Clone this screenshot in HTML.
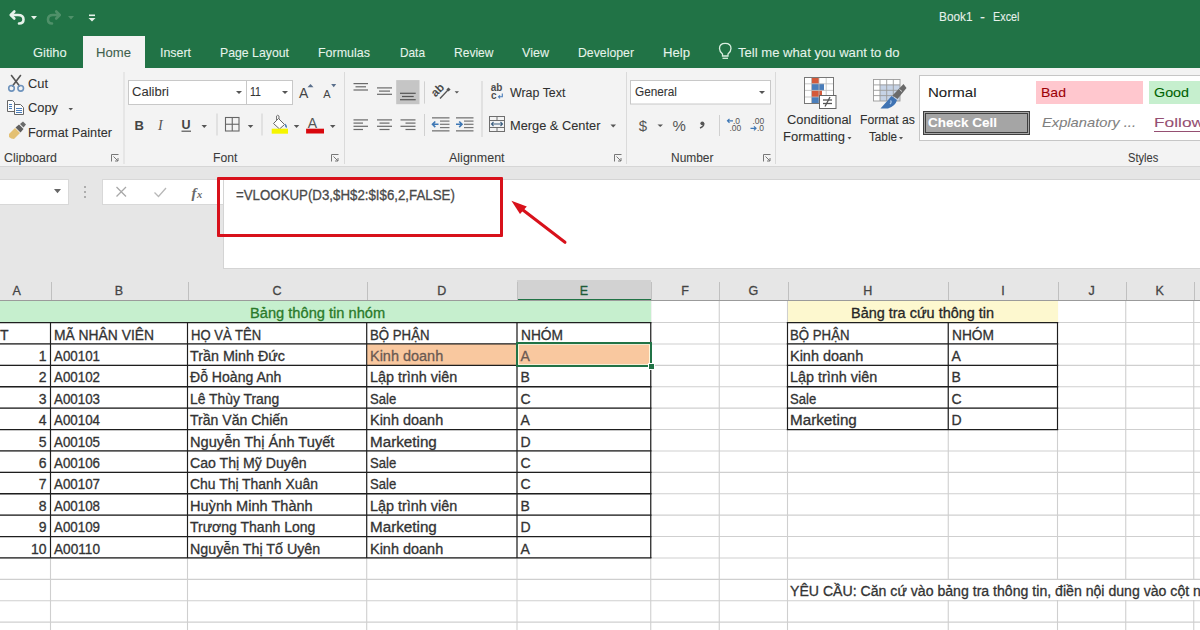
<!DOCTYPE html>
<html><head><meta charset="utf-8"><style>
html,body{margin:0;padding:0;width:1200px;height:630px;overflow:hidden;background:#fff;position:relative;font-family:"Liberation Sans",sans-serif}
.t{position:absolute;white-space:pre;transform-origin:0 0;-webkit-text-stroke:0.3px currentColor}
.r{-webkit-text-stroke:0.08px currentColor}
svg{overflow:visible}
</style></head><body>
<div style="position:absolute;left:0px;top:0px;width:1200px;height:68px;background:#217346;"></div>
<div style="position:absolute;left:83px;top:36px;width:62px;height:32px;background:#f3f3f3;"></div>
<div style="position:absolute;left:0px;top:68px;width:1200px;height:99px;background:#f3f3f3;"></div>
<div style="position:absolute;left:0px;top:166px;width:1200px;height:1px;background:#d6d6d6;"></div>
<div style="position:absolute;left:0px;top:167px;width:1200px;height:113px;background:#e6e6e6;"></div>
<div style="position:absolute;left:919.2px;top:75.3px;width:290px;height:65.3px;background:#ffffff;border:1px solid #c6c6c6;box-sizing:border-box"></div>
<div style="position:absolute;left:1036px;top:81.4px;width:107.2px;height:22.4px;background:#ffc7ce;"></div>
<div style="position:absolute;left:1149.2px;top:81.4px;width:60px;height:22.4px;background:#c6efce;"></div>
<div style="position:absolute;left:923.3px;top:111px;width:106.7px;height:23.8px;background:#a5a5a5;border:3px double #3f3f3f;box-sizing:border-box"></div>
<div style="position:absolute;left:1154px;top:130.5px;width:50px;height:1px;background:#954f72;"></div>
<div style="position:absolute;left:0px;top:179px;width:68.5px;height:26px;background:#ffffff;border:1px solid #d8d8d8;border-left:none;box-sizing:border-box"></div>
<div style="position:absolute;left:102px;top:179px;width:125px;height:26px;background:#ffffff;border:1px solid #d8d8d8;box-sizing:border-box"></div>
<div style="position:absolute;left:222.5px;top:179px;width:990px;height:90px;background:#ffffff;border:1px solid #d4d4d4;box-sizing:border-box"></div>
<div style="position:absolute;left:0px;top:280px;width:1200px;height:21px;background:#e6e6e6;"></div>
<div style="position:absolute;left:517px;top:280px;width:133.75px;height:21px;background:#d2d2d2;"></div>
<div style="position:absolute;left:517px;top:299px;width:133.75px;height:2px;background:#217346;"></div>
<div style="position:absolute;left:50.5px;top:282px;width:1px;height:18px;background:#c0c0c0;"></div>
<div style="position:absolute;left:187.5px;top:282px;width:1px;height:18px;background:#c0c0c0;"></div>
<div style="position:absolute;left:366.7px;top:282px;width:1px;height:18px;background:#c0c0c0;"></div>
<div style="position:absolute;left:517px;top:282px;width:1px;height:18px;background:#c0c0c0;"></div>
<div style="position:absolute;left:650.75px;top:282px;width:1px;height:18px;background:#c0c0c0;"></div>
<div style="position:absolute;left:719.25px;top:282px;width:1px;height:18px;background:#c0c0c0;"></div>
<div style="position:absolute;left:787.5px;top:282px;width:1px;height:18px;background:#c0c0c0;"></div>
<div style="position:absolute;left:948.25px;top:282px;width:1px;height:18px;background:#c0c0c0;"></div>
<div style="position:absolute;left:1057.5px;top:282px;width:1px;height:18px;background:#c0c0c0;"></div>
<div style="position:absolute;left:1125.75px;top:282px;width:1px;height:18px;background:#c0c0c0;"></div>
<div style="position:absolute;left:1193.75px;top:282px;width:1px;height:18px;background:#c0c0c0;"></div>
<div style="position:absolute;left:0px;top:301.5px;width:1200px;height:328.5px;background:#ffffff;"></div>
<svg style="position:absolute;left:0;top:0" width="1200" height="630"><line x1="0" y1="322.55" x2="1200" y2="322.55" stroke="#cfcfcf" stroke-width="1.1"/><line x1="0" y1="343.95" x2="1200" y2="343.95" stroke="#cfcfcf" stroke-width="1.1"/><line x1="0" y1="365.35" x2="1200" y2="365.35" stroke="#cfcfcf" stroke-width="1.1"/><line x1="0" y1="386.75" x2="1200" y2="386.75" stroke="#cfcfcf" stroke-width="1.1"/><line x1="0" y1="408.15" x2="1200" y2="408.15" stroke="#cfcfcf" stroke-width="1.1"/><line x1="0" y1="429.55" x2="1200" y2="429.55" stroke="#cfcfcf" stroke-width="1.1"/><line x1="0" y1="450.95" x2="1200" y2="450.95" stroke="#cfcfcf" stroke-width="1.1"/><line x1="0" y1="472.35" x2="1200" y2="472.35" stroke="#cfcfcf" stroke-width="1.1"/><line x1="0" y1="493.75" x2="1200" y2="493.75" stroke="#cfcfcf" stroke-width="1.1"/><line x1="0" y1="515.15" x2="1200" y2="515.15" stroke="#cfcfcf" stroke-width="1.1"/><line x1="0" y1="536.55" x2="1200" y2="536.55" stroke="#cfcfcf" stroke-width="1.1"/><line x1="0" y1="557.95" x2="1200" y2="557.95" stroke="#cfcfcf" stroke-width="1.1"/><line x1="0" y1="579.35" x2="1200" y2="579.35" stroke="#cfcfcf" stroke-width="1.1"/><line x1="0" y1="600.75" x2="1200" y2="600.75" stroke="#cfcfcf" stroke-width="1.1"/><line x1="0" y1="622.15" x2="1200" y2="622.15" stroke="#cfcfcf" stroke-width="1.1"/><line x1="0" y1="643.55" x2="1200" y2="643.55" stroke="#cfcfcf" stroke-width="1.1"/><line x1="50.50" y1="301" x2="50.50" y2="630" stroke="#cfcfcf" stroke-width="1.1"/><line x1="187.50" y1="301" x2="187.50" y2="630" stroke="#cfcfcf" stroke-width="1.1"/><line x1="366.70" y1="301" x2="366.70" y2="630" stroke="#cfcfcf" stroke-width="1.1"/><line x1="517.00" y1="301" x2="517.00" y2="630" stroke="#cfcfcf" stroke-width="1.1"/><line x1="650.75" y1="301" x2="650.75" y2="630" stroke="#cfcfcf" stroke-width="1.1"/><line x1="719.25" y1="301" x2="719.25" y2="630" stroke="#cfcfcf" stroke-width="1.1"/><line x1="787.50" y1="301" x2="787.50" y2="630" stroke="#cfcfcf" stroke-width="1.1"/><line x1="948.25" y1="301" x2="948.25" y2="630" stroke="#cfcfcf" stroke-width="1.1"/><line x1="1057.50" y1="301" x2="1057.50" y2="630" stroke="#cfcfcf" stroke-width="1.1"/><line x1="1125.75" y1="301" x2="1125.75" y2="630" stroke="#cfcfcf" stroke-width="1.1"/><line x1="1193.75" y1="301" x2="1193.75" y2="630" stroke="#cfcfcf" stroke-width="1.1"/></svg>
<div style="position:absolute;left:0px;top:301.15px;width:650.75px;height:21.4px;background:#c6efce;"></div>
<div style="position:absolute;left:787.5px;top:301.15px;width:270.0px;height:21.4px;background:#fdf8cf;"></div>
<div style="position:absolute;left:366.7px;top:343.95px;width:284px;height:21.4px;background:#f9c89f;"></div>
<div style="position:absolute;left:0px;top:300.2px;width:1200px;height:1.3px;background:#9b9b9b;"></div>
<svg style="position:absolute;left:0;top:0" width="1200" height="630"><line x1="-2.70" y1="322.55" x2="651.45" y2="322.55" stroke="#1e1e1e" stroke-width="1.3"/><line x1="-2.70" y1="343.95" x2="651.45" y2="343.95" stroke="#1e1e1e" stroke-width="1.3"/><line x1="-2.70" y1="365.35" x2="651.45" y2="365.35" stroke="#1e1e1e" stroke-width="1.3"/><line x1="-2.70" y1="386.75" x2="651.45" y2="386.75" stroke="#1e1e1e" stroke-width="1.3"/><line x1="-2.70" y1="408.15" x2="651.45" y2="408.15" stroke="#1e1e1e" stroke-width="1.3"/><line x1="-2.70" y1="429.55" x2="651.45" y2="429.55" stroke="#1e1e1e" stroke-width="1.3"/><line x1="-2.70" y1="450.95" x2="651.45" y2="450.95" stroke="#1e1e1e" stroke-width="1.3"/><line x1="-2.70" y1="472.35" x2="651.45" y2="472.35" stroke="#1e1e1e" stroke-width="1.3"/><line x1="-2.70" y1="493.75" x2="651.45" y2="493.75" stroke="#1e1e1e" stroke-width="1.3"/><line x1="-2.70" y1="515.15" x2="651.45" y2="515.15" stroke="#1e1e1e" stroke-width="1.3"/><line x1="-2.70" y1="536.55" x2="651.45" y2="536.55" stroke="#1e1e1e" stroke-width="1.3"/><line x1="-2.70" y1="557.95" x2="651.45" y2="557.95" stroke="#1e1e1e" stroke-width="1.3"/><line x1="50.50" y1="322.55" x2="50.50" y2="557.95" stroke="#1e1e1e" stroke-width="1.15"/><line x1="187.50" y1="322.55" x2="187.50" y2="557.95" stroke="#1e1e1e" stroke-width="1.15"/><line x1="366.70" y1="322.55" x2="366.70" y2="557.95" stroke="#1e1e1e" stroke-width="1.15"/><line x1="517.00" y1="322.55" x2="517.00" y2="557.95" stroke="#1e1e1e" stroke-width="1.15"/><line x1="650.75" y1="322.55" x2="650.75" y2="557.95" stroke="#1e1e1e" stroke-width="1.15"/><line x1="786.80" y1="322.55" x2="1058.20" y2="322.55" stroke="#1e1e1e" stroke-width="1.3"/><line x1="786.80" y1="343.95" x2="1058.20" y2="343.95" stroke="#1e1e1e" stroke-width="1.3"/><line x1="786.80" y1="365.35" x2="1058.20" y2="365.35" stroke="#1e1e1e" stroke-width="1.3"/><line x1="786.80" y1="386.75" x2="1058.20" y2="386.75" stroke="#1e1e1e" stroke-width="1.3"/><line x1="786.80" y1="408.15" x2="1058.20" y2="408.15" stroke="#1e1e1e" stroke-width="1.3"/><line x1="786.80" y1="429.55" x2="1058.20" y2="429.55" stroke="#1e1e1e" stroke-width="1.3"/><line x1="787.50" y1="322.55" x2="787.50" y2="429.55" stroke="#1e1e1e" stroke-width="1.15"/><line x1="948.25" y1="322.55" x2="948.25" y2="429.55" stroke="#1e1e1e" stroke-width="1.15"/><line x1="1057.50" y1="322.55" x2="1057.50" y2="429.55" stroke="#1e1e1e" stroke-width="1.15"/></svg>
<div style="position:absolute;left:788.0px;top:579.8499999999999px;width:1200px;height:20.4px;background:#ffffff;"></div>
<div style="position:absolute;left:516px;top:342.45px;width:135.75px;height:24.4px;border:2px solid #217346;box-sizing:border-box"></div>
<div style="position:absolute;left:518px;top:344.45px;width:131.75px;height:20.4px;border:1px solid rgba(255,255,230,.85);box-sizing:border-box"></div>
<div style="position:absolute;left:648.25px;top:362.84999999999997px;width:5px;height:5px;background:#217346;border:1px solid #fff;box-sizing:content-box"></div>
<div style="position:absolute;left:217px;top:176.5px;width:285.5px;height:60px;border:3px solid #d8111b;box-sizing:border-box;border-radius:1px"></div>
<svg style="position:absolute;left:0;top:0" width="1200" height="630"><line x1="565" y1="242.3" x2="521" y2="208.5" stroke="#d8111b" stroke-width="3" stroke-linecap="round"/><polygon points="511.4,200.8 526.8,206.6 520,214" fill="#d8111b"/></svg>
<svg style="position:absolute;left:0;top:0" width="1200" height="630">
<!-- QAT undo -->
<g fill="none" stroke="#e6f2ea" stroke-width="2.6" stroke-linecap="round" stroke-linejoin="round">
  <path d="M11 15 L18 15 Q23.5 15 23.5 19.5 Q23.5 23.5 19 23.5"/>
  <path d="M14.3 11.5 L10.8 15 L14.3 18.5"/>
</g>
<polygon points="31,16 37,16 34,19.5" fill="#e6f2ea"/>
<g fill="none" stroke="#4f9069" stroke-width="2.6" stroke-linecap="round" stroke-linejoin="round">
  <path d="M59.5 15 L53 15 Q48 15 48 19.5 Q48 23.5 52 23.5"/>
  <path d="M56.2 11.5 L59.7 15 L56.2 18.5"/>
</g>
<polygon points="68,16 74,16 71,19.5" fill="#4f9069"/>
<rect x="89" y="14.5" width="6" height="1.6" fill="#e6f2ea"/>
<polygon points="88.5,18 95.5,18 92,21.5" fill="#e6f2ea"/>
<!-- ribbon group separators -->
<rect x="123.5" y="72" width="1" height="92" fill="#dadada"/>
<rect x="344" y="72" width="1" height="92" fill="#dadada"/>
<rect x="626" y="72" width="1" height="92" fill="#dadada"/>
<rect x="775" y="72" width="1" height="92" fill="#dadada"/>
<!-- launchers -->
<g fill="none" stroke="#777" stroke-width="1">
  <path d="M111.5 161.5 V154.5 H118.5"/><path d="M113.5 156.5 L118 161 M118 158 V161 H115"/>
  <path d="M331.5 161.5 V154.5 H338.5"/><path d="M333.5 156.5 L338 161 M338 158 V161 H335"/>
  <path d="M614.5 161.5 V154.5 H621.5"/><path d="M616.5 156.5 L621 161 M621 158 V161 H618"/>
  <path d="M763.5 161.5 V154.5 H770.5"/><path d="M765.5 156.5 L770 161 M770 158 V161 H767"/>
</g>
<!-- scissors -->
<g stroke="#555" stroke-width="1.6" stroke-linecap="round">
  <line x1="11.5" y1="75.5" x2="19.5" y2="86"/>
  <line x1="20.5" y1="75.5" x2="12.5" y2="86"/>
</g>
<g fill="none" stroke="#6e93bd" stroke-width="1.6">
  <circle cx="11.5" cy="88.3" r="2.8"/><circle cx="20.7" cy="88.3" r="2.8"/>
</g>
<!-- copy -->
<g fill="#fdfdfd" stroke="#666" stroke-width="1">
  <path d="M7.5 100.5 H12.5 L14.5 102.5 V111.5 H7.5 Z"/>
  <path d="M14.5 104.5 H20.5 L23.5 107.5 V114.5 H14.5 Z"/>
</g>
<g stroke="#4a7ebb" stroke-width="1">
  <line x1="9" y1="104.5" x2="12" y2="104.5"/><line x1="9" y1="106.5" x2="12" y2="106.5"/><line x1="9" y1="108.5" x2="12" y2="108.5"/>
  <line x1="16" y1="108.5" x2="22" y2="108.5"/><line x1="16" y1="110.5" x2="22" y2="110.5"/><line x1="16" y1="112.5" x2="22" y2="112.5"/>
</g>
<!-- format painter -->
<path d="M9 134 L15 128 L20 133 L14 139 Q11 139 9 137 Z" fill="#e3c073"/>
<path d="M15.5 127.5 L19 124.5 L23.5 129 L20.5 132.5 Z" fill="#5f5f5f"/>
<path d="M20 124 L23 121.5 L26 124.5 L23.5 127.5 Z" fill="#6b6b6b"/>
<!-- font boxes -->
<rect x="128.5" y="80.5" width="118" height="24" fill="#fff" stroke="#c8c8c8"/>
<rect x="246.5" y="80.5" width="46" height="24" fill="#fff" stroke="#c8c8c8"/>
<polygon points="236,91 242,91 239,94" fill="#555"/>
<polygon points="282,91 288,91 285,94" fill="#555"/>
<!-- grow/shrink A -->
<text x="299" y="98" font-family="Liberation Sans" font-size="14" fill="#444">A</text>
<polygon points="307.5,87.2 313.5,87.2 310.5,84" fill="#5a6f8c"/>
<text x="323.3" y="98" font-family="Liberation Sans" font-size="11" fill="#444">A</text>
<polygon points="331.2,84 336.2,84 333.7,87.2" fill="#5a6f8c"/>
<!-- B I U -->
<text x="134.5" y="129.5" font-family="Liberation Sans" font-size="13" font-weight="bold" fill="#444">B</text>
<text x="158" y="129.5" font-family="Liberation Serif" font-size="14" font-style="italic" fill="#555">I</text>
<text x="181.5" y="129" font-family="Liberation Sans" font-size="12.5" font-weight="bold" fill="#444">U</text>
<rect x="181.5" y="130.6" width="9.5" height="1.2" fill="#555"/>
<g fill="#555">
  <polygon points="201.5,125 207,125 204.25,128"/>
  <polygon points="247.8,125 253.3,125 250.5,128"/>
  <polygon points="293.8,125 299.3,125 296.5,128"/>
  <polygon points="330,125 335.5,125 332.7,128"/>
</g>
<rect x="216.5" y="113.5" width="1" height="22" fill="#d0d0d0"/>
<rect x="261.5" y="113.5" width="1" height="22" fill="#d0d0d0"/>
<!-- borders -->
<g fill="none" stroke="#666" stroke-width="1.1">
  <rect x="225.5" y="117.5" width="13.5" height="13.5"/>
  <line x1="232.25" y1="117.5" x2="232.25" y2="131"/><line x1="225.5" y1="124.25" x2="239" y2="124.25"/>
</g>
<!-- fill color -->
<path d="M273.5 123.5 L278.5 118.5 L284.5 124.5 L279.5 129 Z" fill="#fff" stroke="#666" stroke-width="1"/>
<path d="M276.5 121 V116 Q277.5 114.5 279 116 V119" fill="none" stroke="#777" stroke-width="1"/>
<path d="M285 123.5 Q288 126 286.5 128 Q284.5 127 285 123.5 Z" fill="#4a7ebb"/>
<rect x="271.7" y="128.7" width="16.3" height="5" fill="#f5f500"/>
<!-- font color -->
<text x="307.8" y="128.3" font-family="Liberation Sans" font-size="14" fill="#555">A</text>
<rect x="306.1" y="128.7" width="17.9" height="4.8" fill="#d9070d"/>
<!-- alignment top row -->
<g fill="#6a6a6a">
  <rect x="353.5" y="83" width="14.5" height="1.2"/><rect x="355.5" y="86.2" width="10.5" height="1.2"/><rect x="353.5" y="89.4" width="14.5" height="1.2"/>
  <rect x="377" y="87.3" width="15" height="1.2"/><rect x="379" y="90.5" width="11" height="1.2"/><rect x="377" y="93.7" width="15" height="1.2"/>
</g>
<rect x="396.2" y="80.1" width="23.3" height="24.1" fill="#c5c5c5"/>
<g fill="#555">
  <rect x="400" y="92.7" width="15.7" height="1.2"/><rect x="402" y="95.9" width="11.7" height="1.2"/><rect x="400" y="99.1" width="15.7" height="1.2"/>
</g>
<!-- alignment second row -->
<g fill="#6a6a6a">
  <rect x="353.5" y="119.3" width="14.5" height="1.2"/><rect x="353.5" y="122.5" width="9.5" height="1.2"/><rect x="353.5" y="125.7" width="14.5" height="1.2"/><rect x="353.5" y="128.9" width="9.5" height="1.2"/>
  <rect x="377" y="119.3" width="15" height="1.2"/><rect x="379.5" y="122.5" width="10" height="1.2"/><rect x="377" y="125.7" width="15" height="1.2"/><rect x="379.5" y="128.9" width="10" height="1.2"/>
  <rect x="400.5" y="119.3" width="15" height="1.2"/><rect x="405.5" y="122.5" width="10" height="1.2"/><rect x="400.5" y="125.7" width="15" height="1.2"/><rect x="405.5" y="128.9" width="10" height="1.2"/>
</g>
<rect x="424" y="81.4" width="1" height="22.2" fill="#d0d0d0"/>
<rect x="424" y="114" width="1" height="22" fill="#d0d0d0"/>
<rect x="481.5" y="81" width="1" height="56" fill="#d0d0d0"/>
<!-- orientation -->
<text x="0" y="0" font-family="Liberation Sans" font-size="11.5" font-weight="bold" fill="#4a4a4a" transform="translate(435.5,97.5) rotate(-45)">ab</text>
<line x1="440" y1="98.5" x2="448" y2="90" stroke="#555" stroke-width="1.3"/>
<rect x="447" y="88" width="3" height="3" fill="#555" transform="rotate(45 448.5 89.5)"/>
<polygon points="454.6,91.2 459,91.2 456.8,93.6" fill="#555"/>
<!-- indent icons -->
<g fill="#777">
  <rect x="432" y="117.2" width="17.5" height="1.3"/><rect x="440" y="120.5" width="9.5" height="1.2"/><rect x="440" y="123.7" width="9.5" height="1.2"/><rect x="440" y="127" width="9.5" height="1.2"/><rect x="432" y="130.2" width="17.5" height="1.3"/>
  <rect x="456" y="117.2" width="17.5" height="1.3"/><rect x="464" y="120.5" width="9.5" height="1.2"/><rect x="464" y="123.7" width="9.5" height="1.2"/><rect x="464" y="127" width="9.5" height="1.2"/><rect x="456" y="130.2" width="17.5" height="1.3"/>
</g>
<g fill="none" stroke="#3f78b5" stroke-width="1.6">
  <path d="M438.5 124.3 H432.5 M435.3 121.5 L432.5 124.3 L435.3 127.1"/>
  <path d="M456 124.3 H462 M459.2 121.5 L462 124.3 L459.2 127.1"/>
</g>
<!-- wrap text icon -->
<text x="490.8" y="91.3" font-family="Liberation Sans" font-size="10" font-weight="bold" fill="#4d4d4d">ab</text>
<text x="491" y="98.8" font-family="Liberation Sans" font-size="10" font-weight="bold" fill="#4d4d4d">c</text>
<path d="M502.3 93.5 V96.8 H498.5 M500 95.3 L498.5 96.8 L500 98.3" fill="none" stroke="#4a7ebb" stroke-width="1.1"/>
<!-- merge icon -->
<g fill="none" stroke="#6e6e6e" stroke-width="1">
  <rect x="489.5" y="116.5" width="15" height="15"/>
  <line x1="489.5" y1="120.5" x2="504.5" y2="120.5"/><line x1="489.5" y1="127.5" x2="504.5" y2="127.5"/>
  <line x1="497" y1="116.5" x2="497" y2="120.5"/><line x1="497" y1="127.5" x2="497" y2="131.5"/>
</g>
<path d="M491.5 124 H502.5 M493.5 122 L491.5 124 L493.5 126 M500.5 122 L502.5 124 L500.5 126" fill="none" stroke="#3d5f80" stroke-width="1.1"/>
<polygon points="610.5,124.5 616,124.5 613.2,127.5" fill="#555"/>
<!-- number -->
<rect x="630.5" y="80.5" width="140" height="23.5" fill="#fff" stroke="#c8c8c8"/>
<polygon points="759,91 765,91 762,94" fill="#555"/>
<text x="638.8" y="130.5" font-family="Liberation Sans" font-size="15" fill="#555">$</text>
<polygon points="657.5,124.5 663,124.5 660.25,127" fill="#555"/>
<text x="672.5" y="131" font-family="Liberation Sans" font-size="15" fill="#555">%</text>
<circle cx="702.3" cy="123.3" r="1.9" fill="#555"/><path d="M703.8 123.5 Q704 126.5 700 128" fill="none" stroke="#555" stroke-width="1.4"/>
<rect x="719" y="115" width="1" height="21" fill="#d0d0d0"/>
<text x="733" y="123.6" font-family="Liberation Sans" font-size="8.5" fill="#555">.0</text>
<text x="729.5" y="131.1" font-family="Liberation Sans" font-size="8.5" fill="#555">.00</text>
<path d="M733 120.8 H727.5 M729.5 118.8 L727.5 120.8 L729.5 122.8" fill="none" stroke="#3f78b5" stroke-width="1.2"/>
<text x="752.5" y="123.6" font-family="Liberation Sans" font-size="8.5" fill="#555">.00</text>
<text x="757" y="131.1" font-family="Liberation Sans" font-size="8.5" fill="#555">.0</text>
<path d="M750.5 128.3 H756 M754 126.3 L756 128.3 L754 130.3" fill="none" stroke="#3f78b5" stroke-width="1.2"/>
<!-- conditional formatting icon -->
<rect x="804.2" y="77.2" width="29.3" height="26.3" fill="#fff"/>
<rect x="811.5" y="77.2" width="7.5" height="6.6" fill="#d45a3a"/>
<rect x="811.5" y="83.8" width="12.5" height="6.6" fill="#4a7ebb"/>
<rect x="811.5" y="90.4" width="10.5" height="6.6" fill="#d45a3a"/>
<rect x="811.5" y="97" width="7.5" height="6.5" fill="#4a7ebb"/>
<g fill="none" stroke="#bbb" stroke-width="0.8">
  <line x1="804.2" y1="83.8" x2="833.5" y2="83.8"/><line x1="804.2" y1="90.4" x2="833.5" y2="90.4"/><line x1="804.2" y1="97" x2="833.5" y2="97"/>
  <line x1="811.5" y1="77.2" x2="811.5" y2="103.5"/><line x1="819" y1="77.2" x2="819" y2="103.5"/><line x1="826.2" y1="77.2" x2="826.2" y2="103.5"/>
</g>
<rect x="804.5" y="77.5" width="29" height="26" fill="none" stroke="#777" stroke-width="1"/>
<rect x="819.5" y="95.5" width="16.5" height="13" fill="#fff" stroke="#666" stroke-width="1"/>
<g stroke="#555" stroke-width="1.3" fill="none"><line x1="823" y1="100" x2="832" y2="100"/><line x1="823" y1="103.5" x2="832" y2="103.5"/><line x1="830" y1="97" x2="825" y2="106.5"/></g>
<!-- format as table icon -->
<rect x="873" y="79.2" width="27" height="21.8" fill="#fff"/>
<rect x="880" y="84.6" width="20" height="16.4" fill="#c6d3e6"/>
<g fill="none" stroke="#9a9a9a" stroke-width="0.9">
  <rect x="873.5" y="79.5" width="26.5" height="21.5"/>
  <line x1="880" y1="79.5" x2="880" y2="101"/><line x1="886.7" y1="79.5" x2="886.7" y2="101"/><line x1="893.3" y1="79.5" x2="893.3" y2="101"/>
  <line x1="873.5" y1="84.9" x2="900" y2="84.9"/><line x1="873.5" y1="90.3" x2="900" y2="90.3"/><line x1="873.5" y1="95.6" x2="900" y2="95.6"/>
</g>
<path d="M903.5 84 L906.5 88 L897.5 99 L892.5 95.5 Z" fill="#6a6a6a"/><line x1="899.5" y1="89.5" x2="902" y2="91.5" stroke="#f3f3f3" stroke-width="0.8"/>
<path d="M891.5 96 L897 100 Q895.5 106 888 108.5 L880.5 108.5 Q886 102.5 891.5 96 Z" fill="#3f73b3"/><path d="M890.5 100.5 Q892 102 890 104" stroke="#a9c4e4" stroke-width="1.2" fill="none"/>
<!-- dropdown triangles under CF / FaT -->
<polygon points="847.5,137 851.5,137 849.5,139.5" fill="#555"/>
<polygon points="899,137 903,137 901,139.5" fill="#555"/>
<polygon points="68.5,108 73,108 70.75,110.5" fill="#555"/>
<!-- lightbulb -->
<g fill="none" stroke="#d9eee0" stroke-width="1.3">
  <path d="M722.5 56 V54 Q719.5 51.5 719.5 48.5 Q719.5 43.3 725.2 43.3 Q731 43.3 731 48.5 Q731 51.5 728 54 V56 Z"/>
  <line x1="722.5" y1="58.3" x2="728" y2="58.3"/>
</g>
<!-- formula bar controls -->
<polygon points="54,189 61,189 57.5,193.3" fill="#666"/>
<g fill="#9a9a9a"><circle cx="85" cy="187" r="1"/><circle cx="85" cy="192" r="1"/><circle cx="85" cy="197" r="1"/></g>
<g stroke="#a8a8a8" stroke-width="1.3" fill="none">
  <path d="M116.5 187 L126 196.5 M126 187 L116.5 196.5"/>
  <path d="M154.5 192.5 L158.5 196.5 L166 188" stroke="#b8b8b8"/>
</g>
<text x="191.5" y="197.5" font-family="Liberation Serif" font-size="15" font-style="italic" font-weight="bold" fill="#6a6a6a">f</text>
<text x="197" y="197.5" font-family="Liberation Serif" font-size="10.5" font-style="italic" font-weight="bold" fill="#6a6a6a">x</text>
</svg>

<div class="t r" style="left:938.50px;top:10.92px;font-size:12.5px;line-height:12.5px;color:#e8f1ec;transform:scaleX(0.9449);">Book1</div>
<div class="t r" style="left:980.00px;top:10.92px;font-size:12.5px;line-height:12.5px;color:#e8f1ec;transform:scaleX(1.1985);">-</div>
<div class="t r" style="left:993.00px;top:10.92px;font-size:12.5px;line-height:12.5px;color:#e8f1ec;transform:scaleX(0.8666);">Excel</div>
<div class="t r" style="left:33.30px;top:45.99px;font-size:13px;line-height:13px;color:#e6f4eb;transform:scaleX(0.9921);">Gitiho</div>
<div class="t r" style="left:96.30px;top:45.99px;font-size:13px;line-height:13px;color:#3f5f4d;transform:scaleX(1.0090);">Home</div>
<div class="t r" style="left:160.00px;top:45.99px;font-size:13px;line-height:13px;color:#e6f4eb;transform:scaleX(0.9534);">Insert</div>
<div class="t r" style="left:220.00px;top:45.99px;font-size:13px;line-height:13px;color:#e6f4eb;transform:scaleX(0.9450);">Page Layout</div>
<div class="t r" style="left:318.00px;top:45.99px;font-size:13px;line-height:13px;color:#e6f4eb;transform:scaleX(0.9596);">Formulas</div>
<div class="t r" style="left:399.50px;top:45.99px;font-size:13px;line-height:13px;color:#e6f4eb;transform:scaleX(0.9101);">Data</div>
<div class="t r" style="left:453.75px;top:45.99px;font-size:13px;line-height:13px;color:#e6f4eb;transform:scaleX(0.9267);">Review</div>
<div class="t r" style="left:521.70px;top:45.99px;font-size:13px;line-height:13px;color:#e6f4eb;transform:scaleX(0.9659);">View</div>
<div class="t r" style="left:578.00px;top:45.99px;font-size:13px;line-height:13px;color:#e6f4eb;transform:scaleX(0.9449);">Developer</div>
<div class="t r" style="left:662.50px;top:45.99px;font-size:13px;line-height:13px;color:#e6f4eb;transform:scaleX(1.0131);">Help</div>
<div class="t r" style="left:738.00px;top:45.99px;font-size:13px;line-height:13px;color:#e6f4eb;transform:scaleX(1.0073);">Tell me what you want to do</div>
<div class="t r" style="left:28.00px;top:77.92px;font-size:12.5px;line-height:12.5px;color:#303030;transform:scaleX(1.0281);">Cut</div>
<div class="t r" style="left:28.00px;top:102.42px;font-size:12.5px;line-height:12.5px;color:#303030;transform:scaleX(1.0278);">Copy</div>
<div class="t r" style="left:28.00px;top:126.92px;font-size:12.5px;line-height:12.5px;color:#303030;transform:scaleX(1.0161);">Format Painter</div>
<div class="t r" style="left:4.00px;top:151.84px;font-size:12px;line-height:12px;color:#3b3b3b;transform:scaleX(1.0316);">Clipboard</div>
<div class="t r" style="left:213.00px;top:151.84px;font-size:12px;line-height:12px;color:#3b3b3b;transform:scaleX(1.0118);">Font</div>
<div class="t r" style="left:448.70px;top:151.84px;font-size:12px;line-height:12px;color:#3b3b3b;transform:scaleX(1.0417);">Alignment</div>
<div class="t r" style="left:671.00px;top:151.84px;font-size:12px;line-height:12px;color:#3b3b3b;transform:scaleX(0.9956);">Number</div>
<div class="t r" style="left:1127.50px;top:151.84px;font-size:12px;line-height:12px;color:#3b3b3b;transform:scaleX(0.9239);">Styles</div>
<div class="t r" style="left:132.00px;top:86.42px;font-size:12.5px;line-height:12.5px;color:#333;transform:scaleX(1.0441);">Calibri</div>
<div class="t r" style="left:250.00px;top:86.42px;font-size:12.5px;line-height:12.5px;color:#333;transform:scaleX(0.8472);">11</div>
<div class="t r" style="left:509.60px;top:87.42px;font-size:12.5px;line-height:12.5px;color:#303030;transform:scaleX(0.9926);">Wrap Text</div>
<div class="t r" style="left:509.60px;top:120.42px;font-size:12.5px;line-height:12.5px;color:#303030;transform:scaleX(1.0245);">Merge &amp; Center</div>
<div class="t r" style="left:635.00px;top:86.42px;font-size:12.5px;line-height:12.5px;color:#333;transform:scaleX(0.9442);">General</div>
<div class="t r" style="left:786.60px;top:114.42px;font-size:12.5px;line-height:12.5px;color:#303030;transform:scaleX(1.0296);">Conditional</div>
<div class="t r" style="left:783.00px;top:131.42px;font-size:12.5px;line-height:12.5px;color:#303030;transform:scaleX(1.0377);">Formatting</div>
<div class="t r" style="left:859.70px;top:114.42px;font-size:12.5px;line-height:12.5px;color:#303030;transform:scaleX(0.9740);">Format as</div>
<div class="t r" style="left:869.00px;top:131.42px;font-size:12.5px;line-height:12.5px;color:#303030;transform:scaleX(0.9367);">Table</div>
<div class="t r" style="left:928.00px;top:85.57px;font-size:13.5px;line-height:13.5px;color:#222;transform:scaleX(1.1145);">Normal</div>
<div class="t r" style="left:1041.00px;top:85.57px;font-size:13.5px;line-height:13.5px;color:#9c0006;transform:scaleX(1.0403);">Bad</div>
<div class="t r" style="left:1154.00px;top:85.57px;font-size:13.5px;line-height:13.5px;color:#006100;transform:scaleX(1.0596);">Good</div>
<div class="t r" style="left:928.00px;top:116.07px;font-size:13.5px;line-height:13.5px;color:#ffffff;font-weight:bold;transform:scaleX(0.9995);">Check Cell</div>
<div class="t r" style="left:1041.70px;top:116.07px;font-size:13.5px;line-height:13.5px;color:#7f7f7f;font-style:italic;transform:scaleX(1.0893);">Explanatory ...</div>
<div class="t r" style="left:1154.00px;top:116.07px;font-size:13.5px;line-height:13.5px;color:#954f72;transform:scaleX(1.2815);">Follow</div>
<div class="t" style="left:235.60px;top:187.65px;font-size:14px;line-height:14px;color:#4a4a4a;transform:scaleX(0.9483);">=VLOOKUP(D3,$H$2:$I$6,2,FALSE)</div>
<div class="t" style="left:12.58px;top:284.92px;font-size:12.5px;line-height:12.5px;color:#444;">A</div>
<div class="t" style="left:114.83px;top:284.92px;font-size:12.5px;line-height:12.5px;color:#444;">B</div>
<div class="t" style="left:272.58px;top:284.92px;font-size:12.5px;line-height:12.5px;color:#444;">C</div>
<div class="t" style="left:437.33px;top:284.92px;font-size:12.5px;line-height:12.5px;color:#444;">D</div>
<div class="t" style="left:579.70px;top:284.92px;font-size:12.5px;line-height:12.5px;color:#1e5c38;">E</div>
<div class="t" style="left:681.18px;top:284.92px;font-size:12.5px;line-height:12.5px;color:#444;">F</div>
<div class="t" style="left:748.51px;top:284.92px;font-size:12.5px;line-height:12.5px;color:#444;">G</div>
<div class="t" style="left:863.36px;top:284.92px;font-size:12.5px;line-height:12.5px;color:#444;">H</div>
<div class="t" style="left:1001.13px;top:284.92px;font-size:12.5px;line-height:12.5px;color:#444;">I</div>
<div class="t" style="left:1088.50px;top:284.92px;font-size:12.5px;line-height:12.5px;color:#444;">J</div>
<div class="t" style="left:1155.58px;top:284.92px;font-size:12.5px;line-height:12.5px;color:#444;">K</div>
<div class="t" style="left:1224.40px;top:284.92px;font-size:12.5px;line-height:12.5px;color:#444;">L</div>
<div class="t" style="left:249.60px;top:305.65px;font-size:14px;line-height:14px;color:#2a7a2a;transform:scaleX(1.0463);">Bảng thông tin nhóm</div>
<div class="t" style="left:851.40px;top:305.65px;font-size:14px;line-height:14px;color:#262626;transform:scaleX(1.0326);">Bảng tra cứu thông tin</div>
<div class="t" style="left:0.00px;top:327.60px;font-size:14px;line-height:14px;color:#333333;">T</div>
<div class="t" style="left:54.20px;top:327.60px;font-size:14px;line-height:14px;color:#333333;transform:scaleX(0.9889);">MÃ NHÂN VIÊN</div>
<div class="t" style="left:190.80px;top:327.60px;font-size:14px;line-height:14px;color:#333333;transform:scaleX(0.9335);">HỌ VÀ TÊN</div>
<div class="t" style="left:369.80px;top:327.60px;font-size:14px;line-height:14px;color:#333333;transform:scaleX(0.9442);">BỘ PHẬN</div>
<div class="t" style="left:521.00px;top:327.60px;font-size:14px;line-height:14px;color:#333333;transform:scaleX(0.9817);">NHÓM</div>
<div class="t" style="left:38.70px;top:349.00px;font-size:14px;line-height:14px;color:#333333;">1</div>
<div class="t" style="left:54.20px;top:349.00px;font-size:14px;line-height:14px;color:#333333;transform:scaleX(0.9528);">A00101</div>
<div class="t" style="left:190.40px;top:349.00px;font-size:14px;line-height:14px;color:#333333;transform:scaleX(1.0229);">Trần Minh Đức</div>
<div class="t" style="left:369.80px;top:349.00px;font-size:14px;line-height:14px;color:#6b5a52;transform:scaleX(1.0333);">Kinh doanh</div>
<div class="t" style="left:520.40px;top:349.00px;font-size:14px;line-height:14px;color:#6b5a52;">A</div>
<div class="t" style="left:38.70px;top:370.40px;font-size:14px;line-height:14px;color:#333333;">2</div>
<div class="t" style="left:54.20px;top:370.40px;font-size:14px;line-height:14px;color:#333333;transform:scaleX(0.9528);">A00102</div>
<div class="t" style="left:190.40px;top:370.40px;font-size:14px;line-height:14px;color:#333333;transform:scaleX(1.0035);">Đỗ Hoàng Anh</div>
<div class="t" style="left:369.80px;top:370.40px;font-size:14px;line-height:14px;color:#333333;transform:scaleX(1.0290);">Lập trình viên</div>
<div class="t" style="left:520.40px;top:370.40px;font-size:14px;line-height:14px;color:#333333;">B</div>
<div class="t" style="left:38.70px;top:391.80px;font-size:14px;line-height:14px;color:#333333;">3</div>
<div class="t" style="left:54.20px;top:391.80px;font-size:14px;line-height:14px;color:#333333;transform:scaleX(0.9528);">A00103</div>
<div class="t" style="left:190.40px;top:391.80px;font-size:14px;line-height:14px;color:#333333;transform:scaleX(0.9908);">Lê Thùy Trang</div>
<div class="t" style="left:369.80px;top:391.80px;font-size:14px;line-height:14px;color:#333333;transform:scaleX(0.9347);">Sale</div>
<div class="t" style="left:520.40px;top:391.80px;font-size:14px;line-height:14px;color:#333333;">C</div>
<div class="t" style="left:38.70px;top:413.20px;font-size:14px;line-height:14px;color:#333333;">4</div>
<div class="t" style="left:54.20px;top:413.20px;font-size:14px;line-height:14px;color:#333333;transform:scaleX(0.9528);">A00104</div>
<div class="t" style="left:190.40px;top:413.20px;font-size:14px;line-height:14px;color:#333333;transform:scaleX(1.0036);">Trần Văn Chiến</div>
<div class="t" style="left:369.80px;top:413.20px;font-size:14px;line-height:14px;color:#333333;transform:scaleX(1.0333);">Kinh doanh</div>
<div class="t" style="left:520.40px;top:413.20px;font-size:14px;line-height:14px;color:#333333;">A</div>
<div class="t" style="left:38.70px;top:434.60px;font-size:14px;line-height:14px;color:#333333;">5</div>
<div class="t" style="left:54.20px;top:434.60px;font-size:14px;line-height:14px;color:#333333;transform:scaleX(0.9528);">A00105</div>
<div class="t" style="left:190.40px;top:434.60px;font-size:14px;line-height:14px;color:#333333;transform:scaleX(1.0442);">Nguyễn Thị Ánh Tuyết</div>
<div class="t" style="left:369.80px;top:434.60px;font-size:14px;line-height:14px;color:#333333;transform:scaleX(1.0867);">Marketing</div>
<div class="t" style="left:520.40px;top:434.60px;font-size:14px;line-height:14px;color:#333333;">D</div>
<div class="t" style="left:38.70px;top:456.00px;font-size:14px;line-height:14px;color:#333333;">6</div>
<div class="t" style="left:54.20px;top:456.00px;font-size:14px;line-height:14px;color:#333333;transform:scaleX(0.9528);">A00106</div>
<div class="t" style="left:190.40px;top:456.00px;font-size:14px;line-height:14px;color:#333333;transform:scaleX(1.0079);">Cao Thị Mỹ Duyên</div>
<div class="t" style="left:369.80px;top:456.00px;font-size:14px;line-height:14px;color:#333333;transform:scaleX(0.9347);">Sale</div>
<div class="t" style="left:520.40px;top:456.00px;font-size:14px;line-height:14px;color:#333333;">C</div>
<div class="t" style="left:38.70px;top:477.40px;font-size:14px;line-height:14px;color:#333333;">7</div>
<div class="t" style="left:54.20px;top:477.40px;font-size:14px;line-height:14px;color:#333333;transform:scaleX(0.9528);">A00107</div>
<div class="t" style="left:190.40px;top:477.40px;font-size:14px;line-height:14px;color:#333333;transform:scaleX(0.9939);">Chu Thị Thanh Xuân</div>
<div class="t" style="left:369.80px;top:477.40px;font-size:14px;line-height:14px;color:#333333;transform:scaleX(0.9347);">Sale</div>
<div class="t" style="left:520.40px;top:477.40px;font-size:14px;line-height:14px;color:#333333;">C</div>
<div class="t" style="left:38.70px;top:498.80px;font-size:14px;line-height:14px;color:#333333;">8</div>
<div class="t" style="left:54.20px;top:498.80px;font-size:14px;line-height:14px;color:#333333;transform:scaleX(0.9528);">A00108</div>
<div class="t" style="left:190.40px;top:498.80px;font-size:14px;line-height:14px;color:#333333;transform:scaleX(1.0394);">Huỳnh Minh Thành</div>
<div class="t" style="left:369.80px;top:498.80px;font-size:14px;line-height:14px;color:#333333;transform:scaleX(1.0290);">Lập trình viên</div>
<div class="t" style="left:520.40px;top:498.80px;font-size:14px;line-height:14px;color:#333333;">B</div>
<div class="t" style="left:38.70px;top:520.20px;font-size:14px;line-height:14px;color:#333333;">9</div>
<div class="t" style="left:54.20px;top:520.20px;font-size:14px;line-height:14px;color:#333333;transform:scaleX(0.9528);">A00109</div>
<div class="t" style="left:190.40px;top:520.20px;font-size:14px;line-height:14px;color:#333333;transform:scaleX(1.0009);">Trương Thanh Long</div>
<div class="t" style="left:369.80px;top:520.20px;font-size:14px;line-height:14px;color:#333333;transform:scaleX(1.0867);">Marketing</div>
<div class="t" style="left:520.40px;top:520.20px;font-size:14px;line-height:14px;color:#333333;">D</div>
<div class="t" style="left:30.92px;top:541.60px;font-size:14px;line-height:14px;color:#333333;">10</div>
<div class="t" style="left:54.20px;top:541.60px;font-size:14px;line-height:14px;color:#333333;transform:scaleX(0.9739);">A00110</div>
<div class="t" style="left:190.40px;top:541.60px;font-size:14px;line-height:14px;color:#333333;transform:scaleX(1.0181);">Nguyễn Thị Tố Uyên</div>
<div class="t" style="left:369.80px;top:541.60px;font-size:14px;line-height:14px;color:#333333;transform:scaleX(1.0333);">Kinh doanh</div>
<div class="t" style="left:520.40px;top:541.60px;font-size:14px;line-height:14px;color:#333333;">A</div>
<div class="t" style="left:790.40px;top:327.60px;font-size:14px;line-height:14px;color:#333333;transform:scaleX(0.9442);">BỘ PHẬN</div>
<div class="t" style="left:951.60px;top:327.60px;font-size:14px;line-height:14px;color:#333333;transform:scaleX(0.9817);">NHÓM</div>
<div class="t" style="left:790.40px;top:349.00px;font-size:14px;line-height:14px;color:#333333;transform:scaleX(1.0333);">Kinh doanh</div>
<div class="t" style="left:951.60px;top:349.00px;font-size:14px;line-height:14px;color:#333333;">A</div>
<div class="t" style="left:790.40px;top:370.40px;font-size:14px;line-height:14px;color:#333333;transform:scaleX(1.0290);">Lập trình viên</div>
<div class="t" style="left:951.60px;top:370.40px;font-size:14px;line-height:14px;color:#333333;">B</div>
<div class="t" style="left:790.40px;top:391.80px;font-size:14px;line-height:14px;color:#333333;transform:scaleX(0.9347);">Sale</div>
<div class="t" style="left:951.60px;top:391.80px;font-size:14px;line-height:14px;color:#333333;">C</div>
<div class="t" style="left:790.40px;top:413.20px;font-size:14px;line-height:14px;color:#333333;transform:scaleX(1.0867);">Marketing</div>
<div class="t" style="left:951.60px;top:413.20px;font-size:14px;line-height:14px;color:#333333;">D</div>
<div class="t" style="left:789.80px;top:584.40px;font-size:14px;line-height:14px;color:#333333;transform:scaleX(1.0076);">YÊU CẦU: Căn cứ vào bảng tra thông tin, điền nội dung vào cột nhóm</div>
</body></html>
